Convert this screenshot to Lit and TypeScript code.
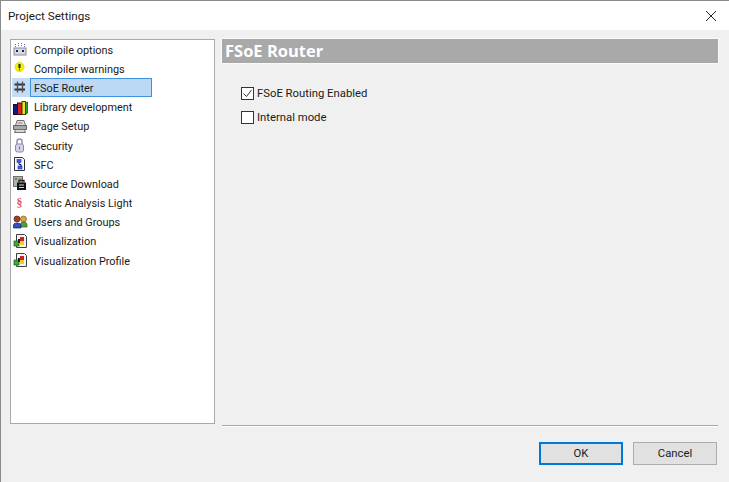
import { html, css, svg, LitElement } from 'lit';
import { customElement } from 'lit/decorators.js';

const icons: Record<string, unknown> = {
  compile: svg`<rect x="1" y="6" width="12" height="7" fill="#d8d8e4" stroke="#8a8a96"/><path d="M2.500 2v3M5.500 1v4M8.500 1v4M11.500 2v3" stroke="#7070c0" stroke-dasharray="1 1"/><path d="M3 9h2M9 9h2" stroke="#20206a" stroke-width="2"/>`,
  warning: svg`<circle cx="6.500" cy="6" r="4.500" fill="#f5f000" stroke="#e0dc20"/><path d="M6.500 3v4" stroke="#222" stroke-width="2"/><path d="M6.500 7.500v2" stroke="#555"/>`,
  router: svg`<path d="M1.500 4.500h10.500M1.500 9.500h10.500" stroke="#303038" stroke-width="2" fill="none"/><path d="M4.500 1.500v11M9.500 1.500v11" stroke="#505058" stroke-width="1.400" fill="none"/>`,
  library: svg`<rect x="0.500" y="4.500" width="4" height="10" fill="#0c1c80" stroke="#101020"/><rect x="4.500" y="3" width="4.500" height="11.500" fill="#e02020" stroke="#301010"/><rect x="9" y="1.500" width="3.500" height="13" fill="#f0e020" stroke="#404010"/><path d="M12.500 3l2-1v11l-2 1.500z" fill="#30a030" stroke="#104010" stroke-width=".7"/>`,
  page: svg`<path d="M4 1.500h7l1.500 5h-10z" fill="#e0e0e0" stroke="#707070"/><path d="M0.500 6.500h13v4h-13z" fill="#a8a8a8" stroke="#606060"/><path d="M2.500 10.500h9l1 3h-11z" fill="#d8d8d8" stroke="#707070"/><path d="M4.500 4h5" stroke="#808080"/>`,
  security: svg`<path d="M4 6.500V3.500a2.500 2.500 0 0 1 5 0v3" fill="none" stroke="#9090b0" stroke-width="1.500"/><rect x="2.500" y="6" width="8" height="8" rx="2" fill="#d4d4e8" stroke="#8888a8"/><path d="M6.500 8.500v3" stroke="#7070a0"/>`,
  sfc: svg`<path d="M1.500.5h8l2 2v11h-10z" fill="#f8f8ff" stroke="#303040"/><rect x="4" y="2.500" width="4" height="3" fill="#4060e0" stroke="#2030a0" stroke-width=".6"/><rect x="5" y="9" width="4" height="3" fill="#4060e0" stroke="#2030a0" stroke-width=".6"/><path d="M6 5.500v2h2v1.500" stroke="#101060" fill="none"/>`,
  source: svg`<rect x="0.500" y="0.500" width="9" height="10" fill="#b0b0b0" stroke="#707070"/><path d="M2 3h2" stroke="#30a040" stroke-width="2"/><path d="M5.500 3h3" stroke="#e05050"/><rect x="4" y="6.500" width="9" height="7.500" fill="#101010"/><path d="M6 6.500V4.500h5v2" fill="none" stroke="#202020" stroke-width="1.300"/><path d="M6 9h5M6 11.500h5" stroke="#d0d0d0"/><path d="M5 15h1" stroke="#30b0b0"/>`,
  users: svg`<circle cx="4" cy="4" r="3" fill="#a04020" stroke="#402010" stroke-width=".7"/><circle cx="10.500" cy="4" r="3" fill="#e0a040" stroke="#806020" stroke-width=".7"/><path d="M7.500 12V9q0-2 3-2t3.500 2v3z" fill="#50a040" stroke="#306030" stroke-width=".7"/><path d="M0.500 13v-3q0-2 3.500-2t4 2v3z" fill="#3050c0" stroke="#102060" stroke-width=".7"/>`,
  visual: svg`<path d="M3.500 .5h8l2 2v11h-10z" fill="#f4f4f4" stroke="#404040"/><rect x="7" y="3" width="4" height="4" fill="#d02020"/><rect x="7" y="7" width="4" height="4" fill="#f0d020"/><rect x="1" y="7" width="5" height="5" fill="#30b030" stroke="#205020" stroke-width=".7"/><rect x="5" y="5" width="2" height="4" fill="#202020"/>`,
};

const items = [
  ['Compile options', 'compile'],
  ['Compiler warnings', 'warning'],
  ['FSoE Router', 'router'],
  ['Library development', 'library'],
  ['Page Setup', 'page'],
  ['Security', 'security'],
  ['SFC', 'sfc'],
  ['Source Download', 'source'],
  ['Static Analysis Light', 'para'],
  ['Users and Groups', 'users'],
  ['Visualization', 'visual'],
  ['Visualization Profile', 'visual'],
];

@customElement('app-root')
export class AppRoot extends LitElement {
  static styles = css`
    :host {
      display: block;
      width: 729px;
      height: 482px;
      font-family: Roboto, 'Noto Sans', sans-serif;
      font-size: 11.3px;
      color: #1a1a1a;
      overflow: hidden;
    }
    .window {
      box-sizing: border-box;
      width: 729px;
      height: 482px;
      display: flex;
      flex-direction: column;
      background: #f0f0f0;
      border-top: 1px solid #8a8a8a;
      border-left: 1px solid #8a8a8a;
    }
    .titlebar {
      height: 29px;
      flex: none;
      display: flex;
      align-items: center;
      justify-content: space-between;
      background: #fff;
      padding: 0 7px;
      font-size: 11.7px;
    }
    .close { width: 12px; height: 12px; margin-right: 5px; }
    .body {
      height: 385px;
      flex: none;
      display: flex;
      gap: 7px;
      padding: 9px 11px 0 9px;
    }
    .tree {
      box-sizing: border-box;
      width: 205px;
      height: 385px;
      background: #fff;
      border: 1px solid #a8a8b0;
      font-size: 10.9px;
    }
    .row {
      display: flex;
      align-items: center;
      height: 19.2px;
    }
    .icon {
      box-sizing: border-box;
      width: 18px;
      height: 19px;
      margin-left: 1px;
      flex: none;
      display: flex;
      align-items: center;
      padding-left: 1px;
    }
    .icon svg { width: 15px; height: 15px; }
    .selected .icon { background: #c4dcf4; }
    .label {
      padding: 1px 3px 0;
      line-height: 17px;
      border: 1px solid transparent;
    }
    .selected .label {
      box-sizing: border-box;
      width: 122px;
      height: 19px;
      background: #bbd9f5;
      border-color: #3d93e0;
    }
    .para {
      width: 13px;
      text-align: center;
      color: #e8505a;
      font-size: 12px;
      font-weight: 700;
      font-family: 'Liberation Serif', serif;
    }
    .panel {
      flex: 1;
      display: flex;
      flex-direction: column;
    }
    .band {
      height: 24px;
      background: #a9a9a9;
      color: #fff;
      font-family: 'Open Sans', sans-serif;
      font-weight: 700;
      font-size: 16.5px;
      line-height: 24px;
      padding-left: 3px;
      outline: 1px solid #fafafa;
    }
    .options {
      display: flex;
      flex-direction: column;
      gap: 8px;
      padding: 22px 0 0 19px;
    }
    .check {
      display: flex;
      align-items: center;
      gap: 3px;
      height: 16px;
    }
    .box {
      box-sizing: border-box;
      width: 13px;
      height: 13px;
      background: #fff;
      border: 1px solid #333;
    }
    .box svg { display: block; width: 11px; height: 11px; }
    .rule {
      height: 2px;
      flex: none;
      margin: 1px 11px 0 221px;
      background: linear-gradient(#a8a8a8 50%, #fff 50%);
    }
    .footer {
      flex: 1;
      display: flex;
      justify-content: flex-end;
      gap: 10px;
      padding: 15px 12px 0 0;
    }
    button {
      box-sizing: border-box;
      width: 84px;
      height: 23px;
      font: inherit;
      color: inherit;
      background: #e1e1e1;
      border: 1px solid #adadad;
      padding: 0;
    }
    button.default {
      border: 2px solid #0078d7;
    }
  `;

  render() {
    return html`
      <div class="window">
        <div class="titlebar">
          <span>Project Settings</span>
          <svg class="close" viewBox="0 0 12 12"><path d="M1 1l10 10M11 1L1 11" stroke="#222" fill="none"/></svg>
        </div>
        <div class="body">
          <div class="tree">
            ${items.map(([text, icon], i) => html`
              <div class="row ${i === 2 ? 'selected' : ''}">
                <span class="icon">
                  ${icon === 'para'
                    ? html`<span class="para">§</span>`
                    : html`<svg viewBox="0 0 15 15">${icons[icon]}</svg>`}
                </span>
                <span class="label">${text}</span>
              </div>
            `)}
          </div>
          <div class="panel">
            <div class="band">FSoE Router</div>
            <div class="options">
              <label class="check">
                <span class="box"><svg viewBox="0 0 11 11"><path d="M1.500 5.500l3 3 5-6.500" stroke="#333" fill="none"/></svg></span>
                FSoE Routing Enabled
              </label>
              <label class="check"><span class="box"></span>Internal mode</label>
            </div>
          </div>
        </div>
        <div class="rule"></div>
        <div class="footer">
          <button class="default">OK</button>
          <button>Cancel</button>
        </div>
      </div>
    `;
  }
}
